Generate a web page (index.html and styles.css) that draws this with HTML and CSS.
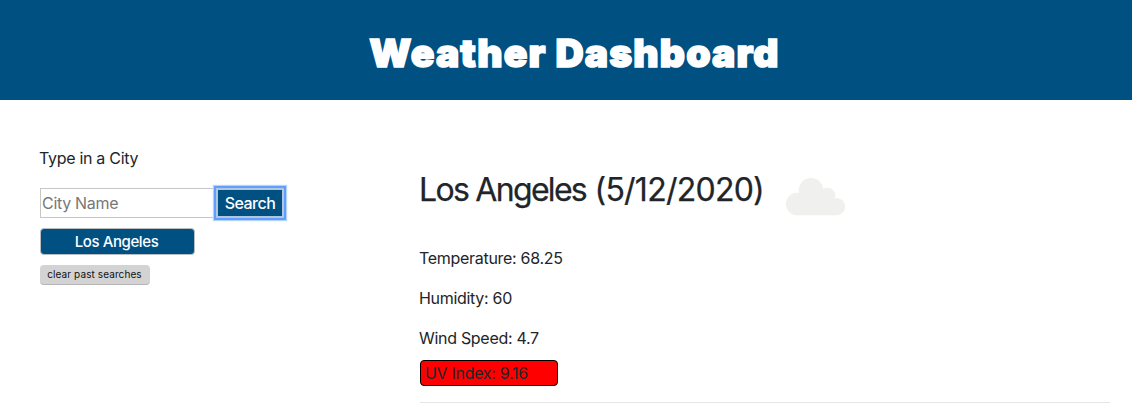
FILE: index.html
```html
<!DOCTYPE html>
<html lang="en">
<head>
<meta charset="utf-8">
<title>Weather Dashboard</title>
<link rel="stylesheet" href="styles.css">
</head>
<body>
<header class="banner"><h1 class="title">Weather Dashboard</h1></header>
<main class="layout">
  <aside class="sidebar">
    <p class="prompt">Type in a City</p>
    <div class="search">
      <input class="city-input" type="text" placeholder="City Name">
      <button class="search-btn">Search</button>
    </div>
    <button class="history-btn">Los Angeles</button>
    <button class="clear-btn">clear past searches</button>
  </aside>
  <section class="weather">
    <div class="heading">
      <h2 class="city"><span class="name">Los Angeles</span> <span class="date">(5/12/2020)</span></h2>
      <svg class="cloud" width="60" height="38" viewBox="0 0 60 38" fill="#f0f0ee"><circle cx="11.2" cy="26" r="11.200"/><circle cx="25" cy="12.300" r="12.300"/><circle cx="41.500" cy="17.500" r="7.800"/><circle cx="50.500" cy="28.600" r="8.600"/><path d="M11 16H44V22H50V37.200H11Z"/></svg>
    </div>
    <p class="reading temp">Temperature: 68.25</p>
    <p class="reading humidity">Humidity: 60</p>
    <p class="reading wind">Wind Speed: 4.7</p>
    <div class="uv">UV Index: 9.16</div>
    <hr class="rule">
  </section>
</main>
</body>
</html>
```
FILE: styles.css
```css
* { box-sizing: border-box; }
body { margin: 0; height: 411px; overflow: hidden; background: #fff; color: #212529; font: 16px/24px Inter, "Liberation Sans", sans-serif; letter-spacing: -0.3px; }
p, h1, h2 { margin: 0; }
p { margin-left: -1px; }
button, input { font-family: inherit; margin: 0; }
.banner { height: 100px; padding: 29px 0 0 17px; background: #005082; display: flex; justify-content: center; }
.title { color: #fff; font: 900 39px/48px Inter, sans-serif; letter-spacing: 1.15px; white-space: nowrap; -webkit-text-stroke: 1.6px #fff; }
.layout { display: grid; grid-template-columns: 380px 690px; padding-left: 40px; }
.sidebar { display: flex; flex-direction: column; align-items: flex-start; padding-top: 46px; }
.search { display: flex; align-items: center; margin-top: 18px; }
.city-input { width: 178px; height: 30px; margin-right: -2px; padding: 1px 1px; border: 1px solid #c6c6c6; font-size: 16px; letter-spacing: -0.3px; color: #212529; outline: 0; }
.city-input::placeholder { color: #777; }
.search-btn { width: 68px; height: 30px; padding: 0; border: 2px solid #b0c7e0; background: #005082; color: #fff; font-size: 16px; font-weight: 500; letter-spacing: -0.5px; box-shadow: 0 0 0 2px #619eff, 0 0 1px 3px #b5d3ff; }
.history-btn { width: 155px; height: 27px; margin-top: 10px; padding: 0 2px 0 0; border: 1px solid #b9bec2; border-radius: 4px; background: #005082; color: #fff; font-size: 15px; font-weight: 500; letter-spacing: -0.4px; }
.clear-btn { width: 110px; height: 20px; margin-top: 10px; padding: 0 1px 1px 0; border: 0; border-bottom: 1px solid #b5b5b5; border-radius: 4px; background: #d3d3d3; color: #111; font-size: 10px; letter-spacing: 0.1px; }
.weather { padding-top: 70px; }
.heading { display: flex; height: 76px; }
.city { width: 367px; margin-left: -1px; padding-top: 1px; font-size: 32px; line-height: 38px; font-weight: 400; letter-spacing: -0.6px; white-space: nowrap; -webkit-text-stroke: 0.25px #212529; }
.name { letter-spacing: -1.7px; }
.date { letter-spacing: -0.75px; }
.cloud { margin-top: 8px; }
.reading { height: 24px; margin-bottom: 16px; }
.wind { margin-bottom: 10px; }
.uv { width: 138px; height: 26px; padding-left: 4px; border: 1px solid #000; border-radius: 4px; background: #f00; }
.rule { margin: 16px 0 0; border: 0; border-top: 1px solid #e5e5e5; }
```
